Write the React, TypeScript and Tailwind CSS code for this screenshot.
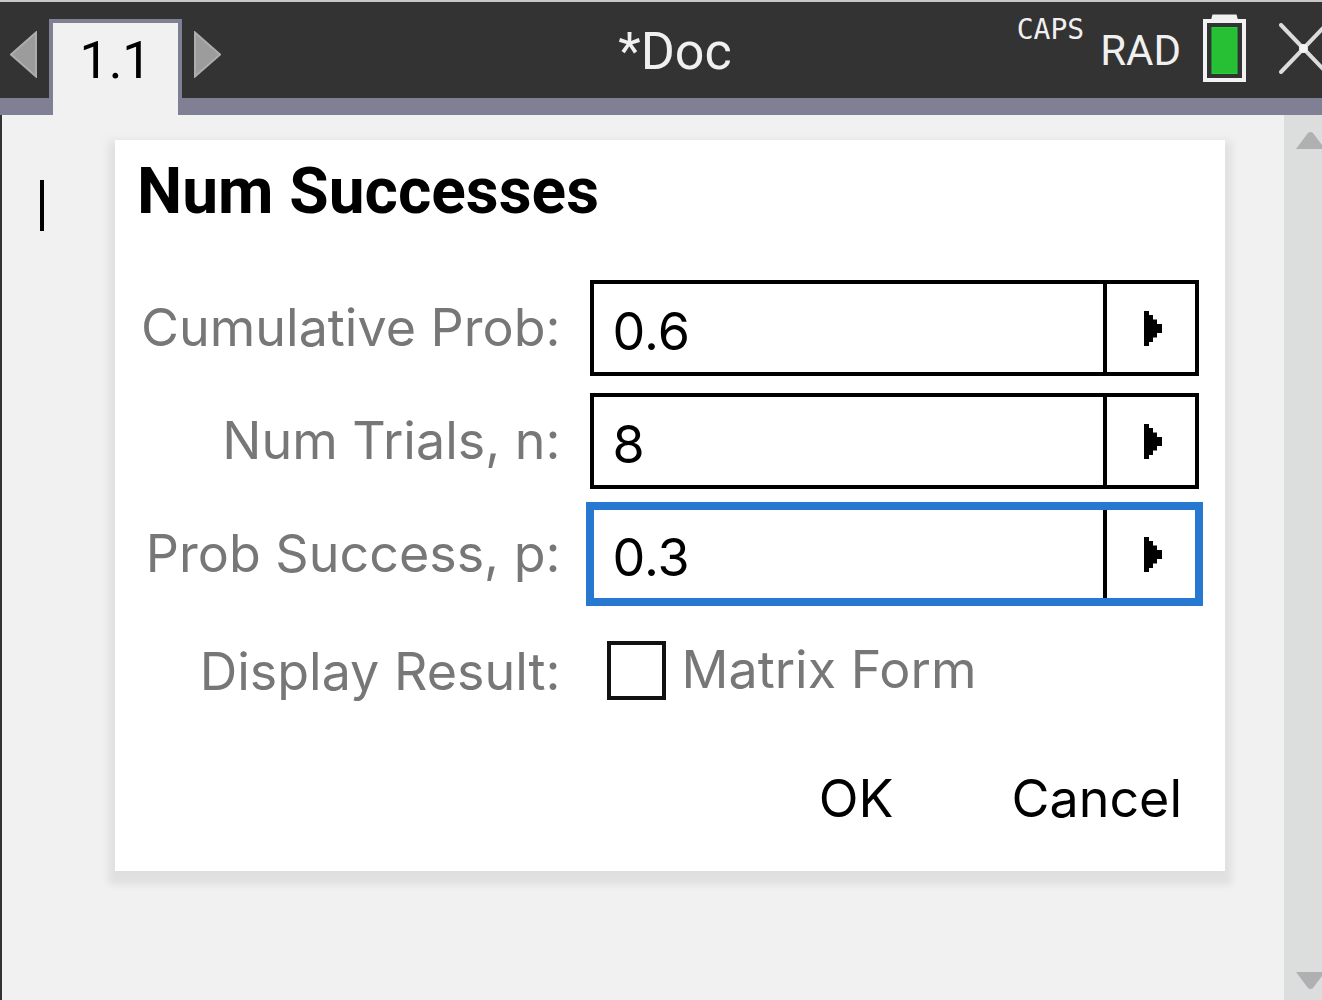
import { useId, useState } from "react";

function TabArrow({ direction }: { direction: "left" | "right" }) {
  const points = direction === "left" ? "1,23.5 26,1.5 26,45.5" : "26,23.5 1,1.5 1,45.5";
  return (
    <button type="button" aria-label={direction === "left" ? "Previous page" : "Next page"} className="shrink-0">
      <svg viewBox="0 0 27 47" className="block h-[47px] w-[27px]">
        <polygon points={points} fill="#9c9c9c" stroke="#adadad" strokeWidth="2" />
      </svg>
    </button>
  );
}

function Battery() {
  return (
    <svg viewBox="0 0 43 68" className="block h-[68px] w-[43px] shrink-0" role="img" aria-label="Battery full">
      <path d="M8 6 9.500 0.500 H33.500 L35 6Z" fill="#f2f2f2" />
      <rect x="2" y="7" width="39" height="59" fill="none" stroke="#f2f2f2" strokeWidth="4" />
      <rect x="9" y="13.500" width="25" height="46" fill="#27c035" stroke="#1fd23a" strokeWidth="1" />
    </svg>
  );
}

function Header() {
  return (
    <header className="shrink-0 overflow-hidden border-t-2 border-[#c8c8ca] bg-[#333333] font-['Roboto',sans-serif] text-[#f0f0f0]">
      <div className="-mr-7 grid h-[113px] grid-cols-[1fr_auto_1fr] border-b-[17px] border-[#808094]">
        <nav className="flex items-start pl-2.5">
          <div className="mt-[29px]">
            <TabArrow direction="left" />
          </div>
          <div className="ml-3 mt-[17px] flex h-24 w-[133px] justify-center border-x-4 border-t-4 border-[#808094] bg-[#f1f1f1] pt-2 text-[52px] leading-[60px] text-black">
            1.1
          </div>
          <div className="ml-3 mt-[29px]">
            <TabArrow direction="right" />
          </div>
        </nav>
        <div className="pt-5 text-[52px] leading-[60px]">*Doc</div>
        <div className="flex items-start justify-end pr-[22px]">
          <span className="pt-3 font-['DejaVu_Sans_Mono',monospace] text-[28px] leading-8">CAPS</span>
          <span className="ml-4 pt-6 text-[42px] leading-[50px]">RAD</span>
          <div className="ml-[22px] mt-3">
            <Battery />
          </div>
          <button type="button" aria-label="Close" className="ml-[33px] mt-[21px] shrink-0">
            <svg viewBox="0 0 49 51" className="block h-[51px] w-[49px]">
              <path d="M2 2 47 49 M47 2 2 49" stroke="#dcdcdc" strokeWidth="4" strokeLinecap="round" />
              <circle cx="24.500" cy="25.500" r="4.500" fill="#f4f4f4" />
            </svg>
          </button>
        </div>
      </div>
    </header>
  );
}

function Field({ label, initial, active = false }: { label: string; initial: string; active?: boolean }) {
  const id = useId();
  const [value, setValue] = useState(initial);
  return (
    <>
      <label htmlFor={id} className="self-center text-right text-[#777777]">
        {label}
      </label>
      <div
        className={
          active
            ? "flex h-24 min-w-0 border-4 border-[#2678d0] bg-white ring-4 ring-[#2678d0]"
            : "flex h-24 min-w-0 border-4 border-black bg-white"
        }
      >
        <input
          id={id}
          type="text"
          value={value}
          onChange={(e) => setValue(e.target.value)}
          className="min-w-0 flex-1 bg-transparent pl-[19px] pt-2 text-black outline-none"
        />
        <button
          type="button"
          aria-label={`${label} options`}
          className="flex w-[92px] shrink-0 items-center justify-center border-l-4 border-black pl-1"
        >
          <svg viewBox="0 0 18 35" className="block h-[35px] w-[18px]">
            <path d="M0 0H5V4H9V8.500H13V13H18V22H13V26.500H9V31H5V35H0Z" fill="#000" />
          </svg>
        </button>
      </div>
    </>
  );
}

function Dialog() {
  return (
    <section
      role="dialog"
      aria-labelledby="dialog-title"
      className="ml-[71px] mr-[59px] mt-[25px] min-w-0 flex-1 self-start bg-white pb-10 pt-3 shadow-[0_8px_8px_6px_rgba(0,0,0,0.06),0_4px_8px_10px_rgba(0,0,0,0.015)]"
    >
      <h1 id="dialog-title" className="pl-[22px] font-['Roboto',sans-serif] text-[64px] font-bold leading-[80px] text-black">
        Num Successes
      </h1>
      <form className="mt-12 pl-[26px] pr-[26px] text-[52px] leading-[64px]" onSubmit={(e) => e.preventDefault()}>
        <div className="grid grid-cols-[auto_1fr] gap-x-[29px] gap-y-[17px]">
          <Field label="Cumulative Prob:" initial="0.6" />
          <Field label="Num Trials, n:" initial="8" />
          <Field label="Prob Success, p:" initial="0.3" active />
          <span className="self-center pt-1 text-right text-[#777777]">Display Result:</span>
          <label className="flex h-[102px] items-center gap-4 pl-[17px] text-[#777777]">
            <input type="checkbox" className="size-[59px] shrink-0 appearance-none border-4 border-[#111111] bg-white checked:bg-[#2678d0]" />
            Matrix Form
          </label>
        </div>
        <div className="mt-[46px] flex justify-end gap-[118px] pr-[17px] text-black">
          <button type="submit">OK</button>
          <button type="button">Cancel</button>
        </div>
      </form>
    </section>
  );
}

function ScrollBar() {
  return (
    <div className="flex w-[38px] shrink-0 flex-col items-end justify-between overflow-hidden bg-[#dcdedd] pb-[11px] pt-[17px]">
      <button type="button" aria-label="Scroll up">
        <svg viewBox="0 0 26 17" className="block h-[17px] w-[26px]">
          <path d="M0 17 12 1Q14.500 -1 17 1L29 17Z" fill="#aeb0b2" />
        </svg>
      </button>
      <button type="button" aria-label="Scroll down">
        <svg viewBox="0 0 26 17" className="block h-[17px] w-[26px]">
          <path d="M0 0 12 16Q14.500 18 17 16L29 0Z" fill="#aeb0b2" />
        </svg>
      </button>
    </div>
  );
}

export default function App() {
  return (
    <div className="flex min-h-screen flex-col bg-[#f1f1f1] font-['Inter',sans-serif]">
      <Header />
      <main className="flex flex-1 border-l-2 border-[#333333]">
        <div className="flex min-w-0 flex-1 pl-[38px]">
          <div className="mt-[65px] h-[51px] w-1 shrink-0 bg-black" />
          <Dialog />
        </div>
        <ScrollBar />
      </main>
    </div>
  );
}
